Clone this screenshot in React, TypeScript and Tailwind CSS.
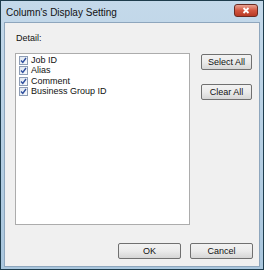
import React from 'react';

const items = ['Job ID', 'Alias', 'Comment', 'Business Group ID'];

const CheckMark: React.FC = () => (
    <span className="w-[9px] h-[9px] border border-[#8e9db5] bg-gradient-to-br from-[#dfe6f0] to-[#f8fafc] flex items-center justify-center shrink-0">
        <svg width="7" height="7" viewBox="0 0 7 7">
            <path d="M1 3.5 L2.8 5.5 L6 1" fill="none" stroke="#2f4f9e" strokeWidth="1.4" />
        </svg>
    </span>
);

const Btn: React.FC<{ label: string; w: string }> = ({ label, w }) => (
    <button className={`${w} h-[16px] border border-[#707070] rounded-[2px] bg-gradient-to-b from-[#f2f2f2] via-[#ebebeb] to-[#d6d6d6] text-[9px] leading-none text-[#111] flex items-center justify-center`}>
        {label}
    </button>
);

const App: React.FC = () => {
    return (
        <div className="w-[264px] h-[270px] bg-[#1e3c4c] p-px" style={{ fontFamily: '"Liberation Sans", Arial, sans-serif' }}>
            <div className="w-full h-full bg-gradient-to-b from-[#c4d9ea] to-[#a9c6dd] flex flex-col px-[3px] pb-[2px]">
                <div className="h-[21px] flex items-center justify-between pl-[2px] pr-[2px]">
                    <span className="text-[10px] text-[#111] mt-px">Column's Display Setting</span>
                    <div className="w-[24px] h-[13px] mt-[-3px] rounded-[3px] border border-[#6b2b22] bg-gradient-to-b from-[#e8a293] via-[#d2553f] to-[#b83a24] flex items-center justify-center">
                        <svg width="8" height="7" viewBox="0 0 8 7">
                            <path d="M1.5 1 L6.5 6 M6.5 1 L1.5 6" stroke="#fff" strokeWidth="1.8" />
                        </svg>
                    </div>
                </div>
                <div className="flex-1 bg-[#f0f0f0] border border-[#8ea6bd] flex flex-col pl-[10px] pr-[5px] pt-[11px] pb-[7px]">
                    <div className="text-[9px] leading-none text-[#111] mb-[10px] pl-px">Detail:</div>
                    <div className="flex gap-[11px]">
                        <div className="w-[175px] h-[172px] bg-white border border-[#acacac] pt-[1px] pl-[3px]">
                            {items.map(it => (
                                <div key={it} className="h-[10.5px] flex items-center gap-[3px]">
                                    <CheckMark />
                                    <span className="text-[9px] leading-none text-[#111]">{it}</span>
                                </div>
                            ))}
                        </div>
                        <div className="flex flex-col gap-[14px] pt-[1px]">
                            <Btn label="Select All" w="w-[51px]" />
                            <Btn label="Clear All" w="w-[51px]" />
                        </div>
                    </div>
                    <div className="flex-1" />
                    <div className="flex justify-end gap-[9px] pr-[1px]">
                        <Btn label="OK" w="w-[63px]" />
                        <Btn label="Cancel" w="w-[63px]" />
                    </div>
                </div>
            </div>
        </div>
    );
};

export default App;
